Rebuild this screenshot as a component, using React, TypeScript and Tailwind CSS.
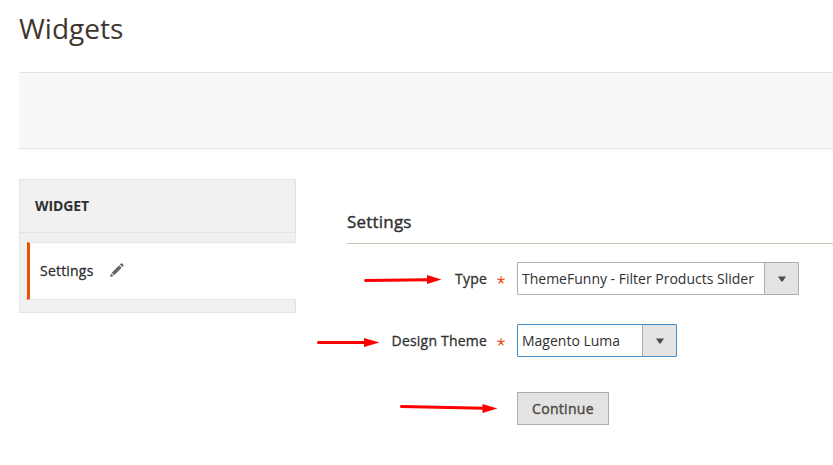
import React from "react";

function SelectBox({ value, className, border }: { value: string; className: string; border: string }) {
  return (
    <div className={`flex h-[33px] rounded-[1px] border bg-white ${border} ${className}`}>
      <span className="flex-1 whitespace-nowrap pl-1 text-[14px] leading-[31px] text-[#303030]">{value}</span>
      <span className="flex w-[34px] items-center justify-center border-l border-[#adadad] bg-[#e3e3e3]">
        <svg width="8" height="6" viewBox="0 0 8 6" className="mt-px">
          <path d="M0 0.5H8L4.6 5.5H3.4Z" fill="#514943" />
        </svg>
      </span>
    </div>
  );
}

function Label({ text }: { text: string }) {
  return (
    <div className="flex w-[170px] shrink-0 items-center justify-end pr-[12px] text-[14px] leading-[33px] tracking-[0.2px] text-[#303030] [-webkit-text-stroke:0.3px]">
      <span>{text}</span>
      <svg width="8" height="8" viewBox="0 0 8 8" className="ml-[10px] mt-[3px]">
        <path d="M4 4V0.2M4 4L0.4 2.9M4 4L7.6 2.9M4 4L1.8 7.3M4 4L6.2 7.3" stroke="#e8501a" strokeWidth="1.2" fill="none" />
      </svg>
    </div>
  );
}

export default function App() {
  return (
    <div className="relative h-[465px] w-[833px] overflow-hidden bg-white font-['Open_Sans',sans-serif] text-[#303030]">
      <header className="h-[72px] pl-[19px] pt-[9px]">
        <h1 className="text-[28px] leading-[38px] text-[#41362f]">Widgets</h1>
      </header>
      <div className="ml-[19px] h-[77px] border-y border-[#e3e3e3] bg-[#f8f8f8]" />
      <div className="flex pt-[30px]">
        <aside className="ml-[19px] h-[134px] w-[277px] shrink-0 border border-[#e3e3e3] bg-[#f1f1f1]">
          <div className="h-[53px] border-b border-[#e3e3e3] pl-[15px] text-[14px] font-bold leading-[52px] tracking-[-0.1px]">WIDGET</div>
          <div className="-mr-px ml-[7px] mt-[9px] flex h-[58px] items-center border-y border-l-[3px] border-[#e3e3e3] border-l-[#eb5202] bg-white pb-0.5 pl-[10px] text-[14px] tracking-[0.2px] [-webkit-text-stroke:0.3px]">
            <span>Settings</span>
            <svg width="14" height="14" viewBox="0 0 14 14" className="ml-4" fill="#666">
              <path d="M0 13.9L1.1 10.4L3.6 12.9ZM1.7 9.8L9.2 2.3L11.7 4.8L4.2 12.3ZM9.9 1.6L11 0.6Q11.7 0 12.3 0.6L13.3 1.6Q14 2.3 13.3 3L12.4 4.1Z" />
            </svg>
          </div>
        </aside>
        <main className="ml-[51px] flex-1 pt-8">
          <h2 className="h-[33px] border-b border-[#cac3b4] text-[17px] leading-[22px] tracking-[0.2px] [-webkit-text-stroke:0.4px]">Settings</h2>
          <div className="mt-[18px] flex">
            <Label text="Type" />
            <SelectBox value="ThemeFunny - Filter Products Slider" className="w-[282px]" border="border-[#adadad]" />
          </div>
          <div className="mt-[29px] flex">
            <Label text="Design Theme" />
            <SelectBox value="Magento Luma" className="w-[160px]" border="border-[#3f8ecb]" />
          </div>
          <button className="ml-[170px] mt-[35px] block h-[33px] w-[92px] border border-[#adadad] bg-[#e3e3e3] text-[14px] leading-[31px] tracking-[0.3px] text-[#514943] [-webkit-text-stroke:0.4px]">Continue</button>
        </main>
      </div>
      <svg className="pointer-events-none absolute inset-0" width="833" height="465" fill="#f00" stroke="#f00" strokeWidth="3" strokeLinecap="round">
        <path d="M365.5 280.5L428 279.7M318.5 342.5L366 342.5M401.5 406.5L484 408.3" />
        <path stroke="none" d="M427 275L441.5 279.5L427 284ZM364 338L379.500 342.500L364 347ZM482.500 404L497.500 408.500L482.500 413Z" />
      </svg>
    </div>
  );
}
